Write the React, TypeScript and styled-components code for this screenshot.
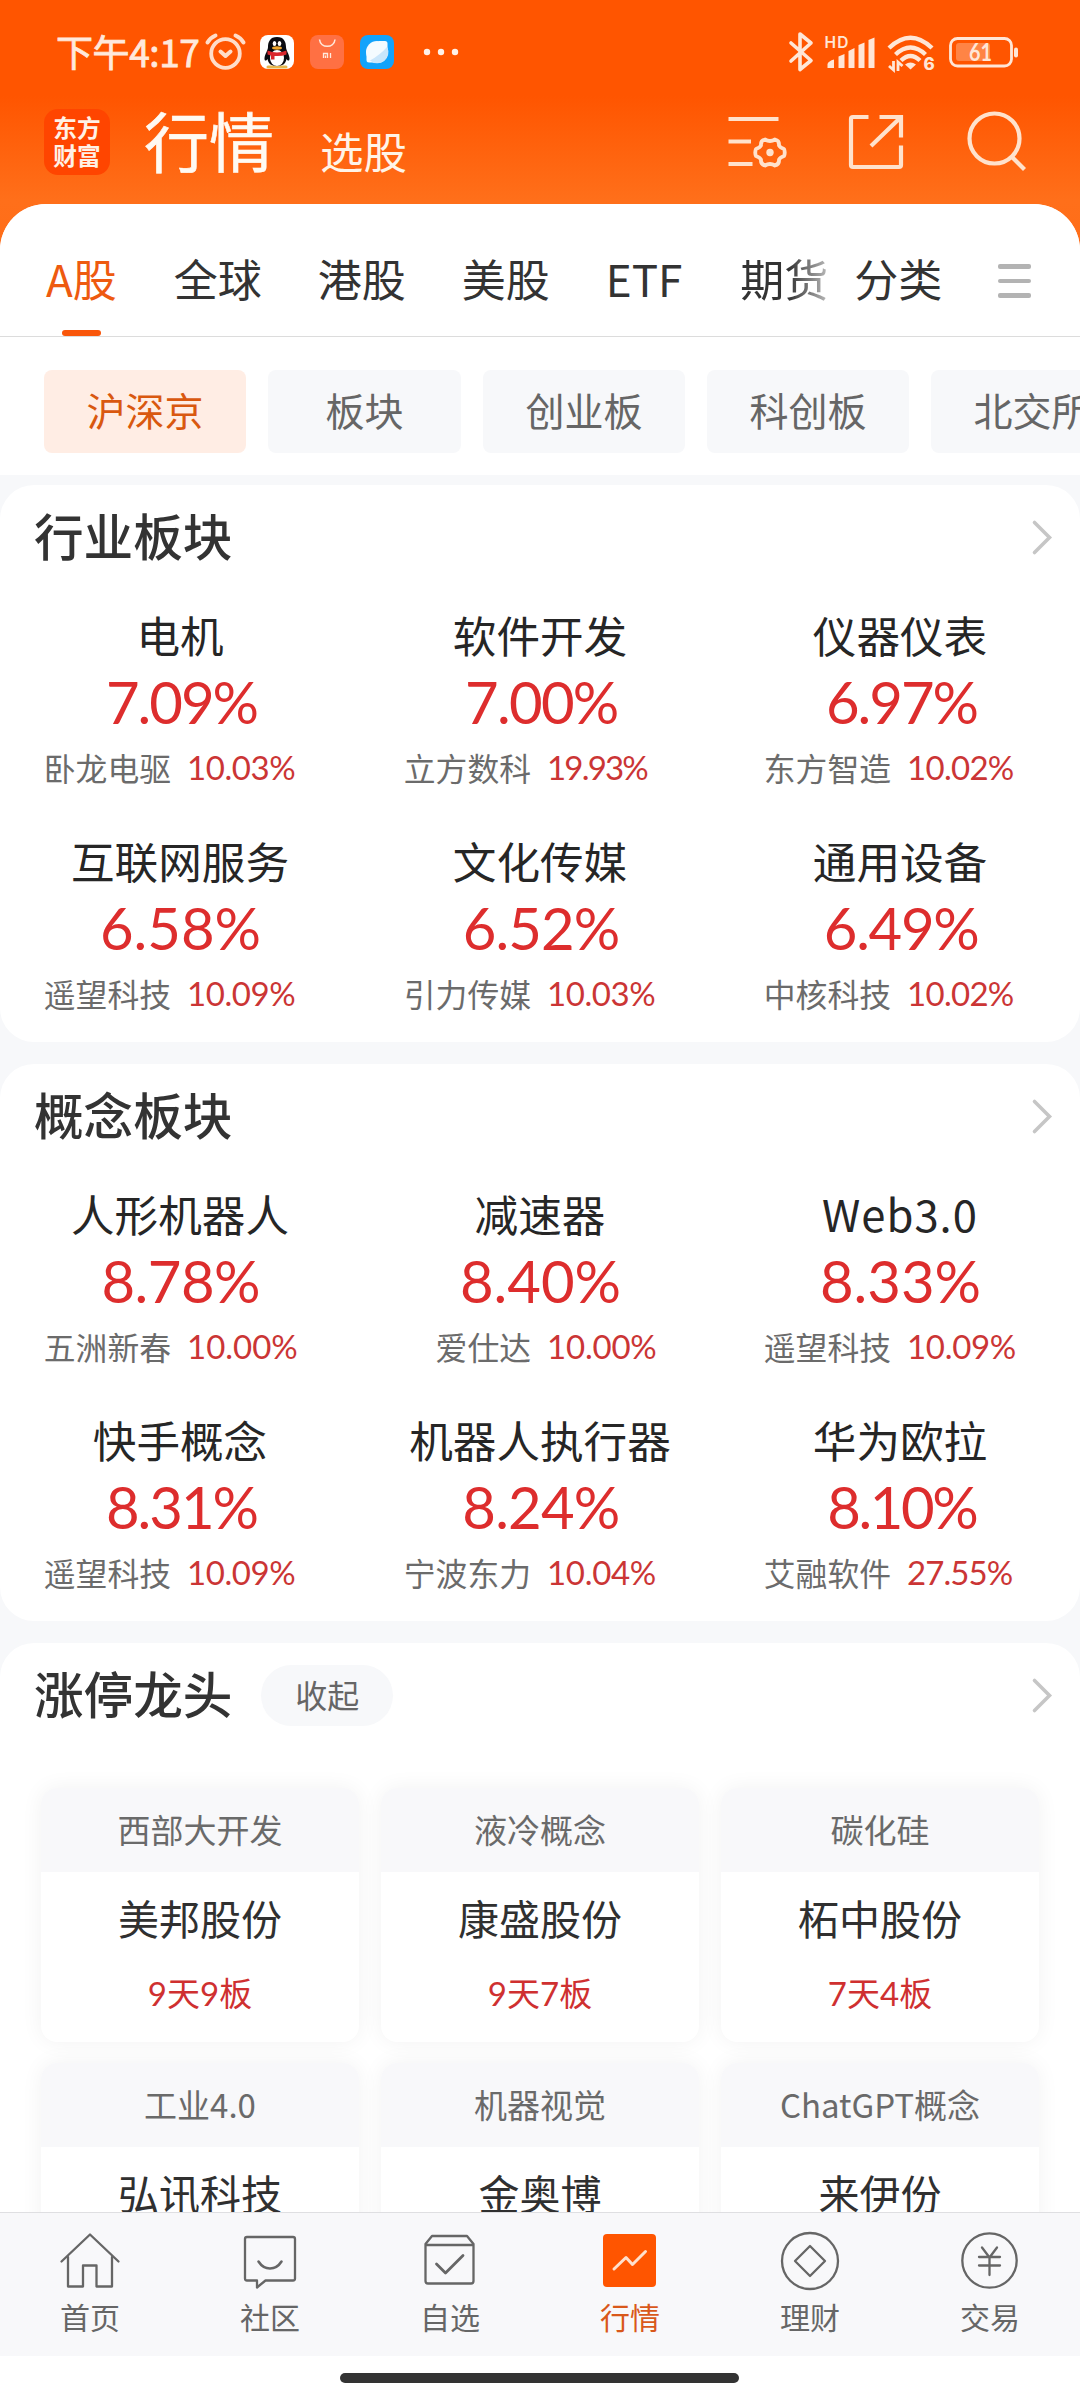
import React from "react";
import styled, { createGlobalStyle } from "styled-components";

const Global = createGlobalStyle`
  *, *::before, *::after { box-sizing: border-box; }
  body { margin: 0; background: #fff; }
  svg { display: block; flex: none; overflow: visible; }
`;

const Screen = styled.div`
  width: 1080px;
  height: 2400px;
  display: flex;
  flex-direction: column;
  overflow: hidden;
  background: linear-gradient(#ff5500 0, #ff5500 96px, #ff6f1a 200px, #ff6d18 260px);
  font-family: "Noto Sans CJK SC", sans-serif;
  color: #333;
  white-space: nowrap;
`;

/* ---------- status bar ---------- */
const StatusBar = styled.div`
  height: 104px;
  flex: none;
  display: flex;
  align-items: center;
  padding: 0 62px 0 56px;
`;
const Clock = styled.span`
  width: 150px;
  font-size: 37px;
  line-height: 48px;
  letter-spacing: -0.4px;
  color: #ffe9dc;
  -webkit-text-stroke: 0.8px #ffe9dc;
  padding-bottom: 3px;
`;
const StatusIcons = styled.div`
  display: flex;
  align-items: center;
`;
const StatusRight = styled(StatusIcons)`
  margin-left: auto;
`;

/* ---------- header ---------- */
const Header = styled.header`
  height: 100px;
  flex: none;
  display: flex;
  align-items: flex-start;
  padding: 5px 53px 0 44px;
`;
const Logo = styled.div`
  width: 66px;
  height: 66px;
  border-radius: 14px;
  background: #ff4500;
  display: grid;
  place-content: center;
  font-size: 23.7px;
  line-height: 28px;
  font-weight: 700;
  color: #fff1e6;
  text-align: center;
  padding-bottom: 3px;
`;
const PageTitle = styled.h1`
  margin: -3px 0 0 34px;
  font-size: 65px;
  line-height: 66px;
  font-weight: 400;
  color: #fffaf2;
  -webkit-text-stroke: 0.6px #fffaf2;
`;
const SubTitle = styled.span`
  margin: 17px 0 0 46px;
  font-size: 43.5px;
  line-height: 50px;
  color: #fff4e8;
`;
const HeaderActions = styled.div`
  margin-left: auto;
  display: flex;
  align-items: flex-start;
  padding-top: 4px;
`;

/* ---------- tabs ---------- */
const Sheet = styled.main`
  flex: 1;
  min-height: 0;
  display: flex;
  flex-direction: column;
  overflow: hidden;
  background: #f7f8fa;
  border-radius: 46px 46px 0 0;
`;
const TabBar = styled.nav`
  height: 133px;
  flex: none;
  display: flex;
  background: #fff;
  border-bottom: 1px solid #dcdcdc;
  padding: 0 49px 0 46px;
  font-size: 44px;
  line-height: 60px;
`;
const Tab = styled.div<{ $active?: boolean; $gap: number }>`
  display: flex;
  flex-direction: column;
  align-items: center;
  justify-content: space-between;
  padding-top: 44px;
  margin-right: ${(p) => p.$gap}px;
  color: ${(p) => (p.$active ? "#ee5a10" : "#333")};
`;
const TabLine = styled.i`
  width: 39px;
  height: 6px;
  border-radius: 3px;
  background: #f9560a;
`;
const Faded = styled.span`
  background: linear-gradient(90deg, #333 55%, #bbb 100%);
  background-clip: text;
  -webkit-background-clip: text;
  color: transparent;
`;
const MenuLines = styled.div`
  margin: 60px 0 0 auto;
  display: flex;
  flex-direction: column;
  gap: 10px;
  i {
    width: 33px;
    height: 4.5px;
    border-radius: 2px;
    background: #b3b3b3;
  }
`;

const Filters = styled.div`
  height: 138px;
  flex: none;
  display: flex;
  gap: 22px;
  padding: 33px 0 0 44px;
  background: #fff;
  overflow: hidden;
`;
const Filter = styled.div<{ $active?: boolean; $w: number }>`
  flex: none;
  width: ${(p) => p.$w}px;
  height: 83px;
  border-radius: 8px;
  font-size: 39px;
  line-height: 79px;
  text-align: center;
  background: ${(p) => (p.$active ? "#ffede4" : "#f7f8fa")};
  color: ${(p) => (p.$active ? "#d9580f" : "#666")};
`;

/* ---------- sections ---------- */
const Sections = styled.div`
  flex: 1;
  min-height: 0;
  display: flex;
  flex-direction: column;
  gap: 22px;
  padding-top: 10px;
  overflow: hidden;
`;
const Card = styled.section<{ $h: number }>`
  height: ${(p) => p.$h}px;
  flex: none;
  background: #fff;
  border-radius: 34px;
`;
const CardHead = styled.div`
  height: 104px;
  display: flex;
  align-items: center;
  padding: 0 27px 0 34px;
`;
const CardTitle = styled.h2`
  margin: 0;
  padding-bottom: 6px;
  font-size: 49.6px;
  line-height: 60px;
  font-weight: 500;
  color: #333;
`;
const Collapse = styled.button`
  margin-left: 29px;
  width: 132px;
  height: 61px;
  padding: 0 0 3px;
  border: 0;
  border-radius: 31px;
  background: #f7f8fa;
  font: 32px/56px "Noto Sans CJK SC", sans-serif;
  color: #666;
`;
const Push = styled.span`
  margin-left: auto;
`;

const Grid = styled.div`
  display: grid;
  grid-template-columns: repeat(3, 360px);
  grid-auto-rows: 226px;
`;
const Cell = styled.div`
  display: flex;
  flex-direction: column;
  align-items: center;
  padding-top: 15px;
`;
const CellName = styled.div<{ $latin?: boolean }>`
  font-size: 43.6px;
  line-height: 60px;
  letter-spacing: ${(p) => (p.$latin ? "1px" : "normal")};
  color: #262626;
`;
const CellValue = styled.div<{ $track: number }>`
  font-family: Lato, sans-serif;
  font-size: 58px;
  line-height: 70px;
  letter-spacing: ${(p) => p.$track}px;
  padding-left: 1px;
  margin: 3px ${(p) => p.$track}px 0 0;
  color: #dd2d2d;
`;
const CellFoot = styled.div`
  align-self: stretch;
  display: grid;
  grid-template-columns: 171px 1fr;
  column-gap: 16px;
  font-size: 31.8px;
  line-height: 44px;
  margin-top: 8px;
  color: #6b6b6b;
`;
const Stock = styled.span`
  text-align: right;
`;
const Pct = styled.span<{ $track: number }>`
  font-family: Lato, sans-serif;
  font-size: 33px;
  letter-spacing: ${(p) => p.$track}px;
  color: #cb3535;
`;

const Leaders = styled.div`
  display: grid;
  grid-template-columns: repeat(3, 318px);
  grid-auto-rows: 254px;
  gap: 21px 22px;
  padding: 41px 0 0 41px;
`;
const Leader = styled.div`
  border-radius: 16px;
  background: #fff;
  overflow: hidden;
  box-shadow: 0 0 22px rgba(0, 0, 0, 0.055);
  text-align: center;
`;
const LeaderTopic = styled.div`
  height: 84px;
  background: #f8f8fa;
  font-size: 33px;
  line-height: 82px;
  color: #6a6a6a;
`;
const LeaderName = styled.div`
  padding-top: 14px;
  font-size: 41px;
  line-height: 62px;
  color: #303030;
`;
const LeaderDays = styled.div`
  margin-top: 22px;
  font-family: Lato, "Noto Sans CJK SC", sans-serif;
  font-size: 33px;
  line-height: 46px;
  color: #cf3030;
`;

/* ---------- bottom navigation ---------- */
const BottomNav = styled.nav`
  height: 144px;
  flex: none;
  display: grid;
  grid-template-columns: repeat(6, 180px);
  background: #f8f8fa;
  border-top: 1px solid #dfdfe2;
`;
const NavItem = styled.div<{ $active?: boolean }>`
  display: flex;
  flex-direction: column;
  align-items: center;
  padding-top: 17px;
  font-size: 30px;
  line-height: 40px;
  color: ${(p) => (p.$active ? "#d9581a" : "#666")};
  svg {
    margin-bottom: 6px;
  }
`;
const HomeArea = styled.div`
  height: 44px;
  flex: none;
  display: flex;
  justify-content: center;
  padding: 17px 1px 0 0;
  background: #fff;
`;
const HomeBar = styled.i`
  width: 399px;
  height: 10px;
  border-radius: 5px;
  background: #333;
`;

/* ---------- icons ---------- */
const PALE = "#ffe6d6";

const LeftStatus = () => (
  <svg width="260" height="40" viewBox="206 32 260 40">
    <g fill="none" stroke="#ffddc9" strokeLinecap="round">
      <circle cx="225.5" cy="53.500" r="14.300" strokeWidth="3.800" />
      <path d="M207.500 42.500q2.500-4.500 8-7M243.500 42.500q-2.500-4.500-8-7" strokeWidth="4" />
      <path d="M220.500 51.500l5 4.500 5-4.500" strokeWidth="4" strokeLinejoin="round" />
    </g>
    <rect x="260" y="35" width="34" height="34" rx="8" fill="#fff" />
    <path d="M268 67h18" stroke="#e5b64d" strokeWidth="3" strokeLinecap="round" />
    <path d="M277 37c-7 0-9 5-9 10 0 3-3 7-3.500 11-.3 3 1.500 3.500 3 1 1 5 4 7 9.500 7s8.500-2 9.500-7c1.500 2.500 3.300 2 3-1-.5-4-3.500-8-3.500-11 0-5-2-10-9-10z" fill="#0b0b10" />
    <ellipse cx="277" cy="58" rx="7" ry="8" fill="#fff" />
    <ellipse cx="274.500" cy="43.500" rx="1.800" ry="2.600" fill="#fff" />
    <ellipse cx="279.500" cy="43.500" rx="1.800" ry="2.600" fill="#fff" />
    <ellipse cx="277" cy="48" rx="5" ry="1.700" fill="#f0a62c" />
    <path d="M267.500 50.500q9.500 4 19 0v4q-5 2-12 1.500v3.500h-3.500v-4l-3.500-1z" fill="#d9252b" />
    <rect x="310" y="35" width="34" height="34" rx="8" fill="#ff7043" />
    <path d="M319.500 39.500c1 9 14.500 9 15.500 0" fill="none" stroke="#ffe9dc" strokeWidth="1.600" />
    <path d="M323.500 58v-4.500h4v4.500M325.500 58v-2.500M330.500 53v5" fill="none" stroke="#ffe9dc" strokeWidth="1.300" />
    <rect x="360" y="35" width="34" height="34" rx="8" fill="#12a3fb" />
    <circle cx="377" cy="52" r="11" fill="#f4fbff" />
    <path d="M378 41h7q2.500 0 2.500 2.500V50zM366.500 53v7q0 2.500 2.500 2.500h7z" fill="#f4fbff" />
    <path d="M387 47q-7 8-17 13.500a11 11 0 0 0 17-13.500z" fill="#c9e6fb" />
    <g fill="#fff1e8">
      <circle cx="427" cy="52" r="3.200" />
      <circle cx="441" cy="52" r="3.200" />
      <circle cx="455" cy="52" r="3.200" />
    </g>
  </svg>
);

const RightStatus = () => (
  <svg width="230" height="40" viewBox="788 32 230 40">
    <path d="M791 43l20 17.500-11 9V34l11 9-20 18" fill="none" stroke={PALE} strokeWidth="3.600" strokeLinejoin="round" strokeLinecap="round" />
    <text x="824.500" y="48" fontSize="15.500" fontFamily="Inter, sans-serif" fontWeight="600" fill={PALE} textLength="24">HD</text>
    <g fill={PALE}>
      <path d="M827.500 68v-4q1-3 6.500-4.500V68zM838.500 68V56.500l6-2.500V68zM848.500 68V51l6-3V68zM858.500 68V45l6-2.500V68zM868.500 68V40l6-2.500V68z" />
      <path d="M905 64.500q5.500-4 11 0l-5.500 5z" />
    </g>
    <g fill="none" stroke={PALE} strokeWidth="4.400">
      <path d="M889 48q21.500-20.500 43 0M895.500 54.500q15-14 30 0M901 60.500q9.500-9 19 0" />
    </g>
    <path d="M893.500 61v9l-4.500-4M898 71v-9l4.500 4" fill="none" stroke={PALE} strokeWidth="2.800" />
    <text x="923.500" y="70" fontSize="17" fontFamily="Inter, sans-serif" fontWeight="800" fill={PALE}>6</text>
    <rect x="950.500" y="38.500" width="61" height="27.500" rx="7" fill="none" stroke={PALE} strokeWidth="2.800" />
    <rect x="956" y="43" width="34" height="18" rx="3" fill="#ff8445" />
    <path d="M1016 49.500v6" stroke={PALE} strokeWidth="4" strokeLinecap="round" />
    <text x="969" y="61" fontSize="24" fontFamily="Lato, sans-serif" fontWeight="700" fill={PALE} textLength="23" lengthAdjust="spacingAndGlyphs">61</text>
  </svg>
);

const ActionIcons = () => (
  <svg width="300" height="60" viewBox="727 113 300 60" fill="none" stroke="#ffe2cc" strokeWidth="4.200">
    <path d="M728.500 119h50M728.500 141.500h22.500M728.500 164h24" />
    <path d="M765 139.500q5 3 10 0 4.500 1 4 6 1 2 5 3.500 1.500 3.500 0 7-4 1.500-5 3.500.5 5-4 6-5-3-10 0-4.500-1-4-6-1-2-5-3.500-1.500-3.500 0-7 4-1.500 5-3.500-.5-5 4-6z" strokeWidth="3.800" strokeLinejoin="round" />
    <circle cx="770" cy="152.500" r="3.700" fill="#ffe2cc" stroke="none" />
    <path d="M868.500 117H853q-2 0-2 2v46q0 2 2 2h46q2 0 2-2v-19.500M879.500 117h21.500v20.500M899 119l-28 27" />
    <circle cx="994.500" cy="138.500" r="25" />
    <path d="M1011.500 156.500l13 13" />
  </svg>
);

const Chevron = () => (
  <svg width="21" height="36" viewBox="0 0 21 36" fill="none" stroke="#c6c6c6" strokeWidth="3.600" strokeLinecap="round">
    <path d="M2.500 3.500l15 15-15 15" />
  </svg>
);

const NavSvg = ({ children }: { children: React.ReactNode }) => (
  <svg width="60" height="60" viewBox="0 0 60 60" fill="none" stroke="#666" strokeWidth="2.300" strokeLinejoin="round" strokeLinecap="round">
    {children}
  </svg>
);

const navIcons = [
  <NavSvg>
    <path d="M1.500 31.500L30 4.500l28.500 27M8 27v29.500h15V35.500h13.500v21H52V27" />
  </NavSvg>,
  <NavSvg>
    <path d="M7 7h46q2 0 2 2v39.500q0 2-2 2H25.500l-8.500 7v-7H7q-2 0-2-2V9q0-2 2-2z" />
    <path d="M18.500 31.500q4.500 7 11.500 7t11.500-7" strokeWidth="2.600" />
  </NavSvg>,
  <NavSvg>
    <path d="M5.500 14L12 6h35l6.500 8v37q0 2.500-2.500 2.500H8q-2.500 0-2.500-2.500zM6 15h47" />
    <path d="M16.500 34l9 9 17.500-17.500" strokeWidth="2.800" />
  </NavSvg>,
  <NavSvg>
    <rect x="3" y="4" width="53" height="53" rx="4" fill="#ff5500" stroke="none" />
    <path d="M14 39l12-11.500 6.500 7 13-13" stroke="#ffe0cc" strokeWidth="3" />
  </NavSvg>,
  <NavSvg>
    <circle cx="30" cy="31" r="28" />
    <path d="M30 16l15 15-15 15-15-15z" />
  </NavSvg>,
  <NavSvg>
    <circle cx="29.500" cy="30.500" r="27.200" />
    <path d="M22 17.500l7.500 10 7.500-10M29.500 27.500V45M19 27h21M19 35.500h21" />
  </NavSvg>,
];

/* ---------- data ---------- */
/* name, change, leading stock, its change, tracking of each change figure */
type Item = [string, string, string, string, number, number];

const industries: Item[] = [
  ["电机", "7.09%", "卧龙电驱", "10.03%", -2, -0.4],
  ["软件开发", "7.00%", "立方数科", "19.93%", -1.7, -1.8],
  ["仪器仪表", "6.97%", "东方智造", "10.02%", -2, -0.7],
  ["互联网服务", "6.58%", "遥望科技", "10.09%", 0, -0.4],
  ["文化传媒", "6.52%", "引力传媒", "10.03%", -0.9, -0.4],
  ["通用设备", "6.49%", "中核科技", "10.02%", -1.3, -0.7],
];
const concepts: Item[] = [
  ["人形机器人", "8.78%", "五洲新春", "10.00%", -0.5, 0],
  ["减速器", "8.40%", "爱仕达", "10.00%", 0, -0.2],
  ["Web3.0", "8.33%", "遥望科技", "10.09%", 0, -0.3],
  ["快手概念", "8.31%", "遥望科技", "10.09%", -2, -0.4],
  ["机器人执行器", "8.24%", "宁波东力", "10.04%", -0.8, -0.3],
  ["华为欧拉", "8.10%", "艾融软件", "27.55%", -2.4, -0.9],
];
const leaders = [
  ["西部大开发", "美邦股份", "9天9板"],
  ["液冷概念", "康盛股份", "9天7板"],
  ["碳化硅", "柘中股份", "7天4板"],
  ["工业4.0", "弘讯科技", ""],
  ["机器视觉", "金奥博", ""],
  ["ChatGPT概念", "来伊份", ""],
];
const filters: [string, number][] = [
  ["沪深京", 202],
  ["板块", 193],
  ["创业板", 202],
  ["科创板", 202],
  ["北交所", 202],
];
const navLabels = ["首页", "社区", "自选", "行情", "理财", "交易"];

const Board = ({ title, items }: { title: string; items: Item[] }) => (
  <Card $h={557}>
    <CardHead>
      <CardTitle>{title}</CardTitle>
      <Push>
        <Chevron />
      </Push>
    </CardHead>
    <Grid>
      {items.map(([name, value, stock, pct, valueTrack, pctTrack]) => (
        <Cell key={name}>
          <CellName $latin={/^[A-Z]/.test(name)}>{name}</CellName>
          <CellValue $track={valueTrack}>{value}</CellValue>
          <CellFoot>
            <Stock>{stock}</Stock>
            <Pct $track={pctTrack}>{pct}</Pct>
          </CellFoot>
        </Cell>
      ))}
    </Grid>
  </Card>
);

export default function App() {
  return (
    <>
      <Global />
      <Screen>
        <StatusBar>
          <Clock>下午4:17</Clock>
          <StatusIcons>
            <LeftStatus />
          </StatusIcons>
          <StatusRight>
            <RightStatus />
          </StatusRight>
        </StatusBar>
        <Header>
          <Logo>
            <span>东方</span>
            <span>财富</span>
          </Logo>
          <PageTitle>行情</PageTitle>
          <SubTitle>选股</SubTitle>
          <HeaderActions>
            <ActionIcons />
          </HeaderActions>
        </Header>
        <Sheet>
          <TabBar>
            <Tab $active $gap={57}>
              A股
              <TabLine />
            </Tab>
            <Tab $gap={56}>全球</Tab>
            <Tab $gap={56}>港股</Tab>
            <Tab $gap={56}>美股</Tab>
            <Tab $gap={58}>ETF</Tab>
            <Tab $gap={26}>
              <Faded>期货</Faded>
            </Tab>
            <Tab $gap={0}>分类</Tab>
            <MenuLines>
              <i />
              <i />
              <i />
            </MenuLines>
          </TabBar>
          <Filters>
            {filters.map(([label, w], i) => (
              <Filter key={label} $w={w} $active={i === 0}>
                {label}
              </Filter>
            ))}
          </Filters>
          <Sections>
            <Board title="行业板块" items={industries} />
            <Board title="概念板块" items={concepts} />
            <Card $h={700}>
              <CardHead>
                <CardTitle>涨停龙头</CardTitle>
                <Collapse>收起</Collapse>
                <Push>
                  <Chevron />
                </Push>
              </CardHead>
              <Leaders>
                {leaders.map(([topic, name, days]) => (
                  <Leader key={name}>
                    <LeaderTopic>{topic}</LeaderTopic>
                    <LeaderName>{name}</LeaderName>
                    <LeaderDays>{days}</LeaderDays>
                  </Leader>
                ))}
              </Leaders>
            </Card>
          </Sections>
        </Sheet>
        <BottomNav>
          {navLabels.map((label, i) => (
            <NavItem key={label} $active={i === 3}>
              {navIcons[i]}
              {label}
            </NavItem>
          ))}
        </BottomNav>
        <HomeArea>
          <HomeBar />
        </HomeArea>
      </Screen>
    </>
  );
}
